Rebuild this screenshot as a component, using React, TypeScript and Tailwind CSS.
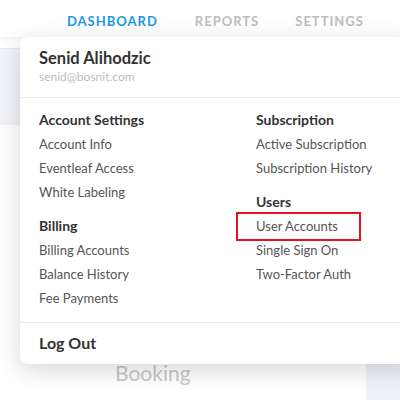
import React from 'react';

const leftSections = [
  { title: 'Account Settings', items: ['Account Info', 'Eventleaf Access', 'White Labeling'] },
  { title: 'Billing', items: ['Billing Accounts', 'Balance History', 'Fee Payments'] },
];

const rightSections = [
  { title: 'Subscription', items: ['Active Subscription', 'Subscription History'] },
  { title: 'Users', items: ['User Accounts', 'Single Sign On', 'Two-Factor Auth'] },
];

function MenuColumn({ sections, className }: { sections: typeof leftSections; className?: string }) {
  return (
    <div className={className}>
      {sections.map((section, i) => (
        <div key={section.title} className={i > 0 ? 'mt-[10px]' : ''}>
          <div className="text-[14px] font-bold leading-[24px] text-[#333]">{section.title}</div>
          {section.items.map((item) => (
            <div key={item} className="relative text-[13px] leading-[24px] text-[#555]">
              {item}
              {item === 'User Accounts' && (
                <span className="absolute -left-[20px] -top-[2px] h-[29px] w-[125px] border-2 border-[#e0141e]" />
              )}
            </div>
          ))}
        </div>
      ))}
    </div>
  );
}

export default function App() {
  return (
    <div
      className="relative h-[400px] w-[400px] overflow-hidden bg-white"
      style={{ fontFamily: 'Lato, "Open Sans", sans-serif' }}
    >
      {/* Top nav */}
      <div className="relative z-10 flex h-[37px] items-center bg-white pt-[6px] shadow-[0_2px_6px_rgba(0,0,0,0.06)]">
        <span className="ml-[67px] text-[13px] font-bold tracking-[1px] text-[#1b9ae4]">DASHBOARD</span>
        <span className="ml-[37px] text-[13px] font-bold tracking-[1px] text-[#bdbdbd]">REPORTS</span>
        <span className="ml-[36px] text-[13px] font-bold tracking-[1px] text-[#bdbdbd]">SETTINGS</span>
      </div>

      {/* Page behind */}
      <div className="flex h-[363px]">
        <div className="flex flex-1 flex-col">
          <div className="mt-[11px] h-[77px] border-t border-[#e6e8ee] bg-[#f1f3f8]" />
          <div className="mt-auto pb-[12px] pl-[115px] text-[21px] text-[#c8c8c8]">Booking</div>
        </div>
        <div className="mt-[40px] w-[34px] bg-[#eef1f7]" />
      </div>

      {/* Dropdown */}
      <div className="absolute left-[20px] top-[37px] z-20 w-[400px] rounded-[8px] bg-white shadow-[0_6px_24px_rgba(0,0,0,0.16)]">
        <div className="border-b border-[#ebebeb] pb-[12px] pl-[19px] pt-[11px]">
          <div className="text-[16.5px] font-bold leading-[20px] text-[#333]">Senid Alihodzic</div>
          <div className="mt-[1px] text-[12px] leading-[16px] text-[#bbb]">senid@bosnit.com</div>
        </div>
        <div className="flex border-b border-[#ebebeb] pb-[12px] pl-[19px] pt-[10px]">
          <MenuColumn sections={leftSections} className="w-[217px]" />
          <MenuColumn sections={rightSections} />
        </div>
        <div className="pb-[11px] pl-[19px] pt-[10px] text-[16px] font-bold leading-[20px] text-[#333]">Log Out</div>
      </div>
    </div>
  );
}
